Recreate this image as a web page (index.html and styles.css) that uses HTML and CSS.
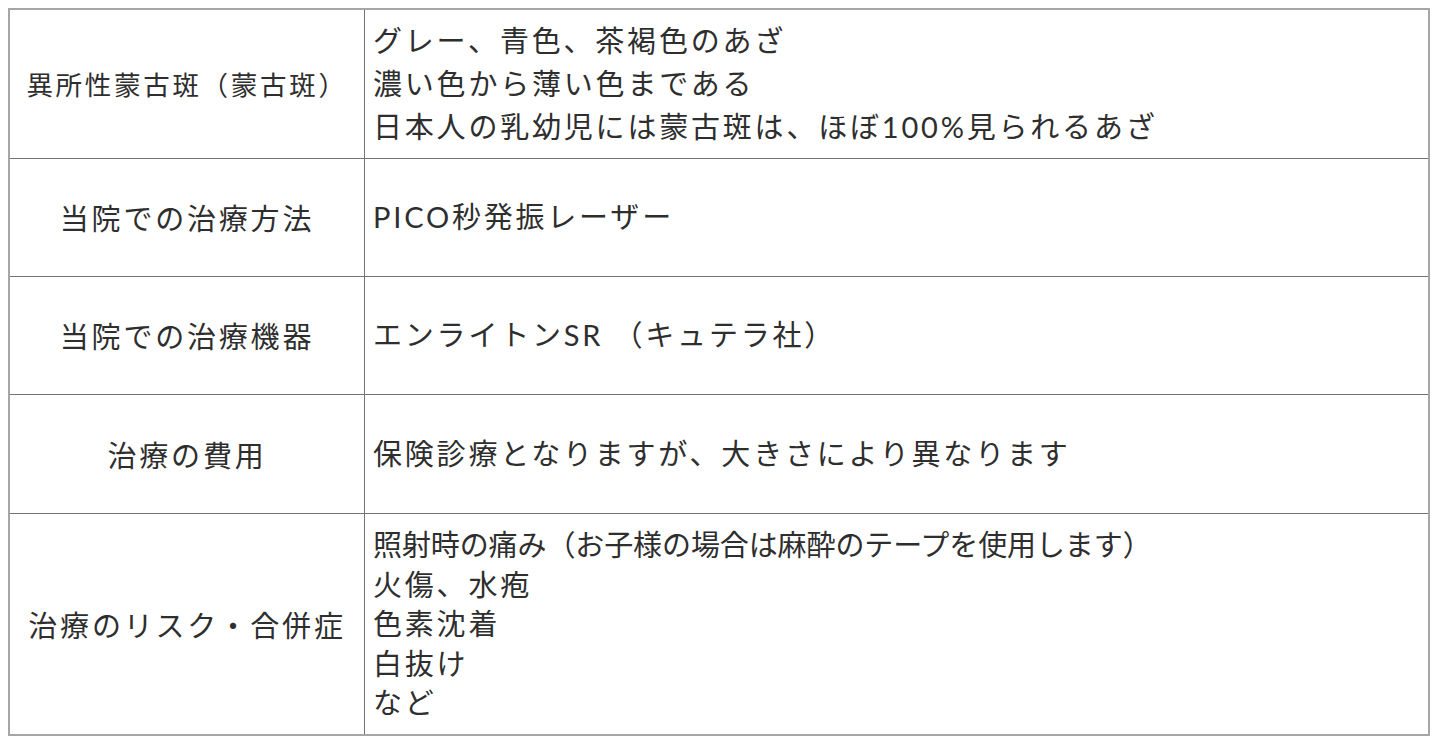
FILE: index.html
```html
<!DOCTYPE html>
<html lang="ja">
<head>
<meta charset="utf-8">
<title>治療について</title>
<link rel="stylesheet" href="styles.css">
</head>
<body>
<table class="info">
  <tbody>
    <tr class="row row-1">
      <th class="label label-small">異所性蒙古斑（蒙古斑）</th>
      <td class="value value-wide">グレー、青色、茶褐色のあざ<br>濃い色から薄い色まである<br>日本人の乳幼児には蒙古斑は、ほぼ100%見られるあざ</td>
    </tr>
    <tr class="row row-2">
      <th class="label">当院での治療方法</th>
      <td class="value">PICO秒発振レーザー</td>
    </tr>
    <tr class="row row-3">
      <th class="label">当院での治療機器</th>
      <td class="value">エンライトンSR （キュテラ社）</td>
    </tr>
    <tr class="row row-4">
      <th class="label">治療の費用</th>
      <td class="value">保険診療となりますが、大きさにより異なります</td>
    </tr>
    <tr class="row row-5">
      <th class="label">治療のリスク・合併症</th>
      <td class="value"><span class="tight">照射時の痛み（お子様の場合は麻酔のテープを使用します）</span><br>火傷、水疱<br>色素沈着<br>白抜け<br>など</td>
    </tr>
  </tbody>
</table>
</body>
</html>
```
FILE: styles.css
```css
html, body {
  margin: 0;
  padding: 0;
  background: #ffffff;
}

body {
  padding: 8px 10px 0 8px;
  font-family: "Lato", "Noto Sans CJK JP", sans-serif;
  color: #2e2e2e;
}

.info {
  width: 1422px;
  border-collapse: collapse;
  border: 2px solid #a6a6a6;
  table-layout: fixed;
}

.row-1 { height: 149px; }
.row-2 { height: 118px; }
.row-3 { height: 118px; }
.row-4 { height: 119px; }
.row-5 { height: 222px; }

.label,
.value {
  border: 1px solid #737373;
  vertical-align: middle;
  font-size: 29px;
  letter-spacing: 2.8px;
  font-weight: 400;
  padding: 0;
}

.label {
  width: 354px;
  text-align: center;
  white-space: nowrap;
}

.label-small {
  font-size: 26.5px;
  letter-spacing: 2.7px;
}

.value {
  text-align: left;
  padding-left: 8px;
  line-height: 39.5px;
}

.value-wide {
  line-height: 43px;
}

.tight {
  letter-spacing: -0.1px;
}
```
